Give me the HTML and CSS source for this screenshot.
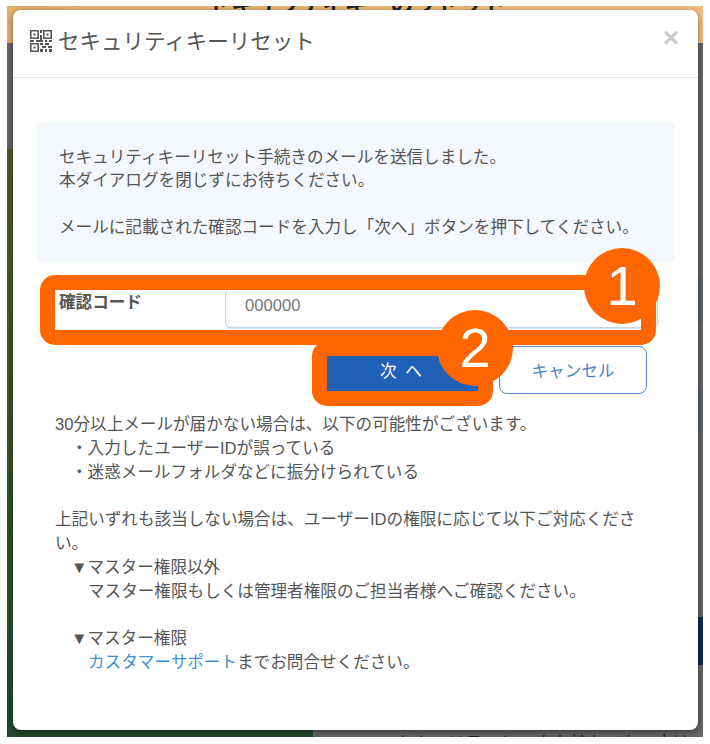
FILE: index.html
```html
<!DOCTYPE html>
<html lang="ja">
<head>
  <meta charset="UTF-8" />
  <meta name="viewport" content="width=device-width, initial-scale=1.0"/>
  <title>セキュリティキーリセット</title>
  <link rel="stylesheet" href="styles.css">
</head>
<body>
  <div class="stage">
    <div class="behind-top">セキュリティキーのリセット</div>
    <div class="behind-bottom">セキュリティキー をお持ちでない方は</div>

    <div class="modal">
      <div class="modal-header">
        <svg class="qr-icon" viewBox="0 0 22 22" width="22" height="22" aria-hidden="true">
          <path fill="#555" fill-rule="evenodd" d="M0 0h9v9H0zM1.6 1.6v5.8h5.8V1.6zM13 0h9v9h-9zM14.6 1.6v5.8h5.8V1.6zM0 13h9v9H0zM1.6 14.6v5.8h5.8v-5.8z"/>
          <path fill="#555" d="M3.5 3.5h2v2h-2zM16.5 3.5h2v2h-2zM3.5 16.5h2v2h-2zM10 0h2v3h-2zM10 5h2v5h-2zM0 10h4v2H0zM6 10h7v2H6zM15 10h2v2h-2zM19 10h3v2h-3zM10 13h3v2h-3zM15 13h4v2h-4zM12 16h4v2h-4zM18 16h4v2h-4zM10 19h3v3h-3zM15 19h2v3h-2zM19 19h3v3h-3z"/>
        </svg>
        <h1 class="modal-title">セキュリティキーリセット</h1>
        <span class="close">×</span>
      </div>

      <div class="modal-body">
        <div class="info-box">
          セキュリティキーリセット手続きのメールを送信しました。<br>
          本ダイアログを閉じずにお待ちください。<br>
          <br>
          メールに記載された確認コードを入力し「次へ」ボタンを押下してください。
        </div>

        <div class="form-row">
          <label class="form-label" for="code">確認コード</label>
          <input class="form-input" id="code" type="text" placeholder="000000">
        </div>

        <div class="button-row">
          <button class="btn btn-next">次 へ</button>
          <button class="btn btn-cancel">キャンセル</button>
        </div>

        <div class="notes">
          <p>30分以上メールが届かない場合は、以下の可能性がございます。</p>
          <p class="indent">・入力したユーザーIDが誤っている</p>
          <p class="indent">・迷惑メールフォルダなどに振分けられている</p>
          <p class="blank">上記いずれも該当しない場合は、ユーザーIDの権限に応じて以下ご対応ください。</p>
          <p class="indent">▼マスター権限以外</p>
          <p class="indent-2">マスター権限もしくは管理者権限のご担当者様へご確認ください。</p>
          <p class="indent blank">▼マスター権限</p>
          <p class="indent-2"><a href="#">カスタマーサポート</a>までお問合せください。</p>
        </div>
      </div>
    </div>

    <div class="mark mark-1"></div>
    <div class="mark mark-2"></div>
    <div class="badge badge-1">1</div>
    <div class="badge badge-2">2</div>
  </div>
</body>
</html>
```

FILE: styles.css
```css
* {
  box-sizing: border-box;
}
body {
  margin: 0;
  background: #fff;
  font-family: "Liberation Sans", "Noto Sans CJK JP", sans-serif;
  color: #555;
  font-size: 16.6px;
  text-spacing-trim: space-all;
}
.stage {
  position: relative;
  width: 696px;
  height: 731px;
  margin: 6px 7px;
  padding: 4px 5px 7px 6px;
  overflow: hidden;
  background:
    linear-gradient(90deg, #e3ae6c, #efbf80) 0 0 / 100% 37px no-repeat,
    linear-gradient(#0f2a55, #0f2a55) 100% 611px / 6px 48px no-repeat,
    linear-gradient(#5c636b, #5c636b) 100% 272px / 6px 46px no-repeat,
    linear-gradient(#5c636b, #5c636b) 100% 380px / 6px 46px no-repeat,
    linear-gradient(#4f5a25, #21492e) 0 143px / 306px 588px no-repeat,
    #666;
}
.behind-top {
  position: absolute;
  top: -21px;
  left: 201px;
  font-size: 23px;
  font-weight: bold;
  color: #222;
  white-space: nowrap;
}
.behind-bottom {
  position: absolute;
  top: 723px;
  left: 390px;
  font-size: 17px;
  color: #222;
  white-space: nowrap;
}
.modal {
  position: relative;
  height: 720px;
  background: #fff;
  border-radius: 8px;
  box-shadow: 0 2px 6px rgba(0,0,0,0.45);
}
.modal-header {
  display: flex;
  align-items: center;
  height: 68px;
  padding: 0 19px 6px 17px;
  border-bottom: 1px solid #e5e5e5;
}
.qr-icon {
  flex: none;
  margin-right: 6px;
}
.modal-title {
  flex: 1;
  margin: 0;
  padding-top: 3px;
  font-size: 21.5px;
  font-weight: normal;
  line-height: 1.4;
}
.close {
  margin-bottom: 6px;
  font-size: 28px;
  font-weight: bold;
  line-height: 1;
  color: #ccc;
}
.modal-body {
  padding: 45px 24px 0;
}
.info-box {
  height: 139px;
  padding: 23px 22px;
  background: #f4f8fe;
  border-radius: 4px;
  line-height: 23.2px;
}
.form-row {
  display: flex;
  margin-top: 26px;
  padding: 0 16px 0 22px;
}
.form-label {
  width: 166px;
  padding-top: 3px;
  font-weight: bold;
  line-height: 24px;
}
.form-input {
  flex: 1;
  height: 40px;
  padding: 0 19px 4px;
  border: 1px solid #c2d4e6;
  border-radius: 6px;
  box-shadow: 0 1px 1px #d5e2ee;
  font: inherit;
  color: #555;
}
.form-input::placeholder {
  color: #777;
}
.button-row {
  display: flex;
  justify-content: flex-end;
  gap: 12px;
  margin-top: 18px;
  padding-right: 27px;
}
.btn {
  width: 148px;
  height: 48px;
  border-radius: 8px;
  font: inherit;
}
.btn-next {
  width: 170px;
  background: #2060b5;
  border: 1px solid #2060b5;
  color: #fff;
  letter-spacing: 2px;
}
.btn-cancel {
  background: #fff;
  border: 1px solid #5a8acb;
  color: #4a7fc5;
}
.notes {
  margin: 19px 29px 0 18px;
  line-height: 23.8px;
}
.notes p {
  margin: 0;
}
.notes .indent {
  padding-left: 16px;
}
.notes .indent-2 {
  padding-left: 33px;
}
.notes .blank {
  margin-top: 23.8px;
}
.notes a {
  color: #3f8fd6;
  text-decoration: none;
}
/* 枠と番号は画面の上に重ねる注釈 */
.mark {
  position: absolute;
  border: 15px solid #ff6600;
  border-radius: 15px;
}
.mark-1 {
  left: 33px;
  top: 269px;
  width: 616px;
  height: 70px;
}
.mark-2 {
  left: 305px;
  top: 335px;
  width: 181px;
  height: 65px;
}
.badge {
  position: absolute;
  width: 76px;
  height: 76px;
  border-radius: 50%;
  background: #ff6600;
  color: #fff;
  font-size: 56px;
  line-height: 76px;
  text-align: center;
}
.badge-1 {
  left: 577px;
  top: 242px;
}
.badge-2 {
  left: 430px;
  top: 304px;
}
```
